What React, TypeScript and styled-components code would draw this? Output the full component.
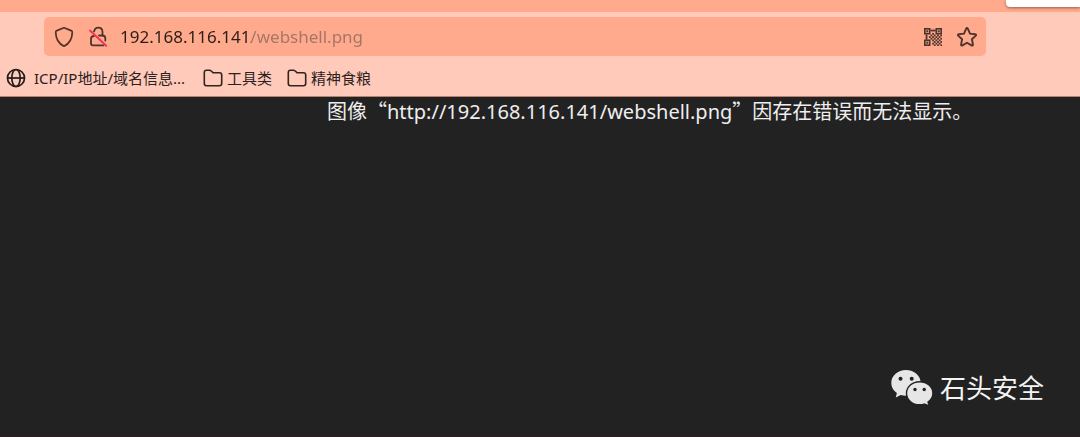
import React from 'react';
import styled, { createGlobalStyle } from 'styled-components';

const uiFont = `"Noto Sans", "Noto Sans CJK SC", sans-serif`;
const cjkFont = `"Noto Sans CJK SC", "Noto Sans", sans-serif`;

const GlobalStyle = createGlobalStyle`
  * { box-sizing: border-box; }
  body { margin: 0; font-family: ${uiFont}; background: #222222; }
  button { border: 0; padding: 0; background: none; font: inherit; color: inherit; }
  svg { display: block; flex: none; }
`;

const Window = styled.div`
  display: flex;
  flex-direction: column;
  min-height: 100vh;
`;

const TabStrip = styled.div`
  display: flex;
  justify-content: flex-end;
  height: 12px;
  background: #ffaa8d;
`;

const PanelEdge = styled.div`
  width: 74px;
  height: 7px;
  background: #ffffff;
  border-bottom-left-radius: 4px;
  box-shadow: 0 1px 3px rgba(90, 40, 20, 0.6);
`;

const Chrome = styled.header`
  background: #ffcab9;
  border-bottom: 1px solid #b9806e;
`;

const Toolbar = styled.div`
  padding: 5px 94px 4px 44px;
`;

const AddressBar = styled.form`
  display: flex;
  align-items: center;
  height: 39px;
  padding: 0 2px 0 3px;
  border-radius: 5px;
  background: #ffaa8d;
  color: #4f342b;
`;

const IconButton = styled.button`
  display: flex;
  align-items: center;
  justify-content: center;
  width: 34px;
  height: 34px;
`;

const UrlInput = styled.input<{ $hostWidth: number }>`
  flex: 1;
  min-width: 0;
  height: 34px;
  margin-left: 5px;
  padding: 0;
  border: 0;
  outline: 0;
  font: 17px/34px ${uiFont};
  color: #2b1d18;
  background: linear-gradient(to right, #2b1d18 ${p => p.$hostWidth}px, #a47464 ${p => p.$hostWidth}px);
  -webkit-background-clip: text;
  background-clip: text;
  -webkit-text-fill-color: transparent;
`;

const Bookmarks = styled.nav`
  display: flex;
  align-items: center;
  gap: 15px;
  height: 36px;
  padding: 0 6px;
`;

const Bookmark = styled.a<{ $gap: number; $minWidth?: number }>`
  display: flex;
  align-items: center;
  gap: ${p => p.$gap}px;
  min-width: ${p => p.$minWidth ?? 0}px;
  font: 15px/20px ${uiFont};
  color: #2b211e;
  text-decoration: none;
  white-space: nowrap;
`;

const Page = styled.main`
  display: flex;
  flex: 1;
  flex-direction: column;
  justify-content: space-between;
  background: #222222;
  border-bottom: 2px solid #2a2024;
`;

const ErrorMessage = styled.p`
  margin: 0;
  padding-left: 327px;
  font: 20px/28px ${cjkFont};
  color: #eeeeee;
  white-space: nowrap;
`;

const Url = styled.span`
  font: 20px/28px ${uiFont};
`;

const Signature = styled.footer`
  display: flex;
  align-items: center;
  justify-content: flex-end;
  gap: 7px;
  padding: 0 36px 28px 0;
  font: 26px/40px ${cjkFont};
  color: #f4f4f4;
`;

const Shield = () => (
  <svg width="20" height="22" viewBox="0 0 20 22" fill="none" stroke="currentColor" strokeWidth="1.7" strokeLinejoin="round" aria-hidden="true">
    <path d="M10 1.8 L17.2 4.6 Q18.4 5 18.3 6.4 C18.1 13 15.5 17.7 10 20.2 C4.5 17.7 1.9 13 1.7 6.4 Q1.6 5 2.8 4.6 Z" />
  </svg>
);

const InsecureLock = () => (
  <svg width="20" height="22" viewBox="0 0 20 22" fill="none" strokeLinecap="round" aria-hidden="true">
    <g stroke="currentColor" strokeWidth="1.8">
      <path d="M6 5.400 C6.700 3 8.200 1.700 10.200 1.700 C12.800 1.700 14.500 3.600 14.500 6.200 V9.500 C16.500 9.500 17.300 10.400 17.300 12.200 V14.500" />
      <path d="M11 9.500 H14.500" />
      <path d="M6 10 C4 10 3 11 3 13 V17.500 Q3 19.400 5 19.400 H15.500" />
    </g>
    <path d="M2 4.500 L18.200 19.800" stroke="#f0355d" strokeWidth="1.9" />
  </svg>
);

const qrCells: number[][] = [
  [4, 1], [5, 1], [6, 1], [1, 4], [1, 5], [1, 6], [5, 3], [3, 5], [4, 4], [6, 4], [5, 5],
  [7, 5], [9, 5], [4, 6], [6, 6], [8, 6], [10, 6], [8, 4], [10, 4], [5, 7], [7, 7], [9, 7],
  [6, 8], [8, 8], [10, 8], [5, 9], [7, 9], [9, 9], [6, 10], [8, 10], [10, 10],
];

const QrCode = () => (
  <svg width="18" height="18" viewBox="0 0 11 11" fill="currentColor" aria-hidden="true">
    {[[0, 0], [7, 0], [0, 7]].map(([x, y]) => (
      <g key={`${x}-${y}`}>
        <rect x={x + 0.5} y={y + 0.5} width="3" height="3" fill="none" stroke="currentColor" strokeWidth="1" />
        <rect x={x + 1.4} y={y + 1.4} width="1.2" height="1.2" />
      </g>
    ))}
    {qrCells.map(([x, y]) => <rect key={`${x}-${y}`} x={x} y={y} width="1.1" height="1.1" />)}
  </svg>
);

const Star = () => (
  <svg width="22" height="22" viewBox="0 0 22 22" fill="none" stroke="currentColor" strokeWidth="1.9" strokeLinejoin="round" aria-hidden="true">
    <path d="M10.1 2.8 Q11 1.2 11.9 2.8 L14 7.6 L19.1 8.2 Q20.9 8.5 19.6 9.9 L15.9 13.3 L16.9 18.4 Q17.1 20.2 15.5 19.4 L11 16.8 L6.5 19.4 Q4.9 20.2 5.1 18.4 L6.1 13.3 L2.4 9.9 Q1.1 8.5 2.9 8.2 L8 7.6 Z" />
  </svg>
);

const Globe = () => (
  <svg width="20" height="20" viewBox="0 0 20 20" fill="none" stroke="#211b19" strokeWidth="1.7" aria-hidden="true">
    <circle cx="10" cy="10" r="8.5" />
    <ellipse cx="10" cy="10" rx="4.2" ry="8.5" />
    <path d="M1.5 10 H18.5" />
  </svg>
);

const Folder = () => (
  <svg width="20" height="18" viewBox="0 0 20 18" fill="none" stroke="#302521" strokeWidth="1.6" strokeLinejoin="round" aria-hidden="true">
    <path d="M1.3 14.5 V3.5 Q1.3 1.3 3.5 1.3 H6.5 Q7.5 1.3 8.2 2 L10 3.7 H16.5 Q18.7 3.7 18.7 5.9 V14.5 Q18.7 16.7 16.5 16.7 H3.5 Q1.3 16.7 1.3 14.5 Z" />
  </svg>
);

const WeChat = () => (
  <svg width="42" height="37" viewBox="0 0 42 37" aria-hidden="true">
    <path fill="#e6e6e6" d="M15 1 C6.8 1 0.3 6.7 0.3 13.9 C0.3 18 2.4 21.6 5.9 24 L4.7 28.6 L9.7 26 C11.4 26.6 13.2 26.8 15 26.8 C23.2 26.8 29.7 21 29.7 13.9 C29.7 6.7 23.2 1 15 1 Z" />
    <path fill="#e6e6e6" stroke="#222222" strokeWidth="1.4" d="M28.6 12.7 C21.3 12.7 15.5 17.8 15.5 24.3 C15.5 30.7 21.3 35.8 28.6 35.8 C30.2 35.8 31.8 35.6 33.2 35.1 L38.3 37 L37 33 C40 30.9 41.9 27.8 41.9 24.3 C41.9 17.8 36 12.7 28.6 12.7 Z" />
    <g fill="#222222">
      <circle cx="9.5" cy="9.8" r="2" />
      <circle cx="20.7" cy="9.8" r="2" />
      <circle cx="24" cy="20.5" r="1.7" />
      <circle cx="33.2" cy="20.5" r="1.7" />
    </g>
  </svg>
);

export default function App() {
  return (
    <Window>
      <GlobalStyle />
      <TabStrip><PanelEdge /></TabStrip>
      <Chrome>
        <Toolbar>
          <AddressBar onSubmit={e => e.preventDefault()}>
            <IconButton type="button" aria-label="跟踪保护"><Shield /></IconButton>
            <IconButton type="button" aria-label="连接不安全"><InsecureLock /></IconButton>
            <UrlInput $hostWidth={131} aria-label="地址" defaultValue="192.168.116.141/webshell.png" spellCheck={false} />
            <IconButton type="button" aria-label="二维码"><QrCode /></IconButton>
            <IconButton type="button" aria-label="添加书签"><Star /></IconButton>
          </AddressBar>
        </Toolbar>
        <Bookmarks>
          <Bookmark href="#ip" $gap={8} $minWidth={182}><Globe />ICP/IP地址/域名信息...</Bookmark>
          <Bookmark href="#tools" $gap={4}><Folder />工具类</Bookmark>
          <Bookmark href="#reading" $gap={4}><Folder />精神食粮</Bookmark>
        </Bookmarks>
      </Chrome>
      <Page>
        <ErrorMessage>图像“<Url>http://192.168.116.141/webshell.png</Url>”因存在错误而无法显示。</ErrorMessage>
        <Signature><WeChat />石头安全</Signature>
      </Page>
    </Window>
  );
}
